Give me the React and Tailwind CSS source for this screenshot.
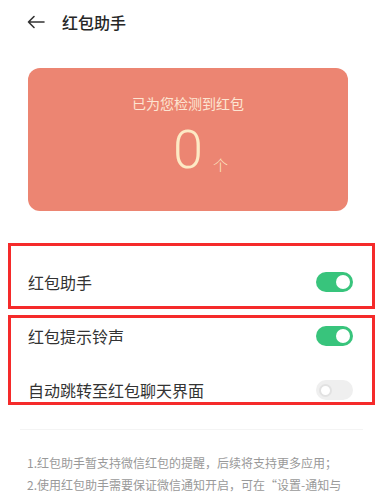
const FONT = { fontFamily: '"Noto Sans CJK SC", "Noto Sans", sans-serif' }

function Toggle({ on }) {
  if (on) {
    return (
      <div className="w-[37px] h-[20px] rounded-full bg-[#38c47c] flex items-center justify-end pr-[3px] shrink-0">
        <div className="w-[14px] h-[14px] rounded-full bg-white" />
      </div>
    )
  }
  return (
    <div className="w-[37px] h-[20px] rounded-full bg-[#efefef] flex items-center pl-[3px] shrink-0">
      <div className="w-[13px] h-[13px] rounded-full bg-white border-2 border-[#e2e2e2]" />
    </div>
  )
}

function Row({ label, on, className = '' }) {
  return (
    <div className={`flex items-center justify-between pl-[17px] pr-[19px] ${className}`}>
      <span className="text-[16px] text-[#333]">{label}</span>
      <Toggle on={on} />
    </div>
  )
}

export default function App() {
  return (
    <div className="w-[383px] h-[500px] bg-white overflow-hidden" style={FONT}>
      {/* Header */}
      <div className="h-[44px] flex items-center pl-[27px]">
        <svg width="18" height="14" viewBox="0 0 18 14" fill="none" stroke="#333" strokeWidth="1.6" strokeLinecap="round" strokeLinejoin="round">
          <path d="M17 7H1.5M7 1.5L1.5 7L7 12.5" />
        </svg>
        <span className="ml-[17px] text-[16px] font-medium text-[#262626]">红包助手</span>
      </div>

      {/* Counter card */}
      <div className="ml-[28px] mt-[24px] w-[320px] h-[143px] rounded-[12px] bg-[#ec8572] flex flex-col items-center">
        <span className="mt-[25px] text-[14px] leading-[20px] text-[#fde5d2]">已为您检测到红包</span>
        <div className="mt-[6px] relative">
          <span className="block text-[54px] leading-[62px] font-light text-[#fde9c4]" style={{ fontFamily: 'Roboto, "Noto Sans", sans-serif' }}>0</span>
          <span className="absolute left-full bottom-[7px] ml-[10px] text-[15px] leading-[18px] font-light text-[#fde9c4] whitespace-nowrap">个</span>
        </div>
      </div>

      {/* Main switch */}
      <div className="mx-[8px] mt-[32px] h-[66px] border-[3px] border-[#f52a2a] pt-[14px]">
        <Row label="红包助手" on className="h-[44px]" />
      </div>

      {/* Sub switches */}
      <div className="mx-[8px] mt-[6px] h-[90px] border-[3px] border-[#f52a2a] flex flex-col overflow-hidden">
        <Row label="红包提示铃声" on className="h-[36px] shrink-0" />
        <Row label="自动跳转至红包聊天界面" on={false} className="h-[36px] mt-[18px] shrink-0" />
      </div>

      {/* Notes */}
      <div className="mt-[24px] mx-[20px] border-t border-[#f4f4f4]" />
      <div className="pl-[27px] pr-[20px] pt-[22px] text-[12px] leading-[22px] text-[#999]">
        <p>1.红包助手暂支持微信红包的提醒，后续将支持更多应用；</p>
        <p>2.使用红包助手需要保证微信通知开启，可在“设置-通知与</p>
      </div>
    </div>
  )
}
